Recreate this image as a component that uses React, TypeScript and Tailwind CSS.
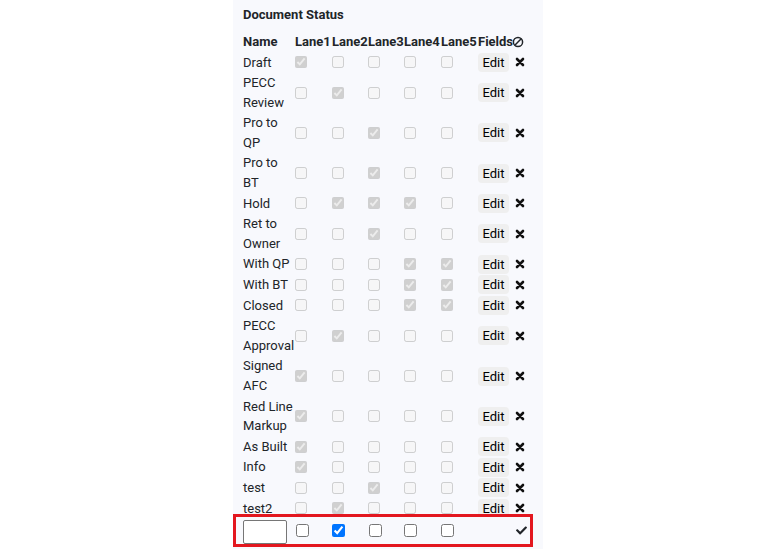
import { FaCheck } from "react-icons/fa";

type Status = { name: string; lanes: boolean[] };

const statuses: Status[] = [
  { name: "Draft", lanes: [true, false, false, false, false] },
  { name: "PECC Review", lanes: [false, true, false, false, false] },
  { name: "Pro to QP", lanes: [false, false, true, false, false] },
  { name: "Pro to BT", lanes: [false, false, true, false, false] },
  { name: "Hold", lanes: [false, true, true, true, false] },
  { name: "Ret to Owner", lanes: [false, false, true, false, false] },
  { name: "With QP", lanes: [false, false, false, true, true] },
  { name: "With BT", lanes: [false, false, false, true, true] },
  { name: "Closed", lanes: [false, false, false, true, true] },
  { name: "PECC Approval", lanes: [false, true, false, false, false] },
  { name: "Signed AFC", lanes: [true, false, false, false, false] },
  { name: "Red Line Markup", lanes: [true, false, false, false, false] },
  { name: "As Built", lanes: [true, false, false, false, false] },
  { name: "Info", lanes: [true, false, false, false, false] },
  { name: "test", lanes: [false, false, true, false, false] },
  { name: "test2", lanes: [false, true, false, false, false] },
];

const cols = "grid grid-cols-[52px_37px_36px_36px_37px_37px_35px_15px] items-center";

function XIcon() {
  return (
    <svg width="10" height="10" viewBox="0 0 10 10" className="ml-[2px]">
      <path d="M2 2 L8 8 M8 2 L2 8" stroke="#111" strokeWidth="2.6" strokeLinecap="round" />
    </svg>
  );
}

export default function App() {
  return (
    <div className="min-h-screen bg-white flex justify-center font-['Roboto',sans-serif] text-[13px] text-[#212529]">
      <div className="w-[310px] h-[549px] bg-[#f8f9fd] flex flex-col">
        <h2 className="pl-[10px] pt-[5px] font-bold leading-[20px]">Document Status</h2>

        <div className={`${cols} pl-[10px] mt-[6px] h-[21px] font-bold`}>
          <span>Name</span>
          <span>Lane1</span>
          <span>Lane2</span>
          <span>Lane3</span>
          <span>Lane4</span>
          <span>Lane5</span>
          <span>Fields</span>
          <svg width="12" height="12" viewBox="0 0 12 12" className="-ml-[1px]">
            <circle cx="6" cy="6" r="4.6" fill="none" stroke="#212529" strokeWidth="1.5" />
            <line x1="2.8" y1="9.2" x2="9.2" y2="2.8" stroke="#212529" strokeWidth="1.5" />
          </svg>
        </div>

        <div className="flex-1 overflow-hidden">
          {statuses.map((s) => (
            <div key={s.name} className={`${cols} pl-[10px] py-[0.5px]`}>
              <span className="leading-[19.6px]">{s.name}</span>
              {s.lanes.map((on, i) => (
                <span key={i} className="flex">
                  <input type="checkbox" disabled checked={on} readOnly className="w-[12px] h-[12px]" />
                </span>
              ))}
              <button className="h-[19px] w-[31px] rounded-[4px] bg-[#efefef] text-black leading-[19px] text-center">
                Edit
              </button>
              <XIcon />
            </div>
          ))}
        </div>

        <div className={`${cols} w-[300px] h-[33px] mb-[2px] pl-[7px] border-[3px] border-[#e3171f]`}>
          <input
            type="text"
            className="w-[44px] h-[24px] mt-[3px] border border-[#767676] rounded-[2px] bg-white"
          />
          <span className="flex pl-px">
            <input type="checkbox" className="w-[13px] h-[13px]" />
          </span>
          <span className="flex">
            <input type="checkbox" defaultChecked className="w-[13px] h-[13px]" />
          </span>
          <span className="flex pl-px">
            <input type="checkbox" className="w-[13px] h-[13px]" />
          </span>
          <span className="flex">
            <input type="checkbox" className="w-[13px] h-[13px]" />
          </span>
          <span className="flex">
            <input type="checkbox" className="w-[13px] h-[13px]" />
          </span>
          <span />
          <FaCheck className="text-[#212529] w-[11px] h-[11px] ml-[3px]" />
        </div>
      </div>
    </div>
  );
}
